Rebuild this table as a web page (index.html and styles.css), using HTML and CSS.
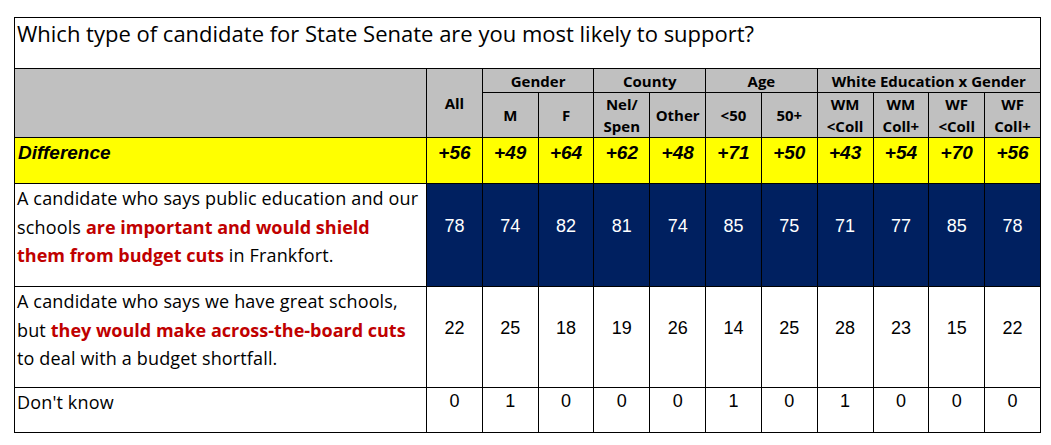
FILE: index.html
```html
<!DOCTYPE html>
<html lang="en">
<head>
<meta charset="utf-8">
<title>State Senate candidate poll</title>
<link rel="stylesheet" href="styles.css">
</head>
<body>
<div class="page">
<table class="poll">
  <colgroup>
    <col class="c-label">
    <col><col><col><col><col><col><col><col><col><col><col>
  </colgroup>
  <tr class="r-title">
    <td colspan="12" class="title">Which type of candidate for State Senate are you most likely to support?</td>
  </tr>
  <tr class="r-h1">
    <td rowspan="2" class="hdr blank"></td>
    <th rowspan="2" class="hdr">All</th>
    <th colspan="2" class="hdr">Gender</th>
    <th colspan="2" class="hdr">County</th>
    <th colspan="2" class="hdr">Age</th>
    <th colspan="4" class="hdr">White Education x Gender</th>
  </tr>
  <tr class="r-h2">
    <th class="hdr">M</th>
    <th class="hdr">F</th>
    <th class="hdr">Nel/<br>Spen</th>
    <th class="hdr">Other</th>
    <th class="hdr">&lt;50</th>
    <th class="hdr">50+</th>
    <th class="hdr">WM<br>&lt;Coll</th>
    <th class="hdr">WM<br>Coll+</th>
    <th class="hdr">WF<br>&lt;Coll</th>
    <th class="hdr">WF<br>Coll+</th>
  </tr>
  <tr class="r-diff">
    <td class="diff-label">Difference</td>
    <td class="diff">+56</td><td class="diff">+49</td><td class="diff">+64</td><td class="diff">+62</td><td class="diff">+48</td><td class="diff">+71</td><td class="diff">+50</td><td class="diff">+43</td><td class="diff">+54</td><td class="diff">+70</td><td class="diff">+56</td>
  </tr>
  <tr class="r-a">
    <td class="label">A candidate who says public education and our schools <span class="hl">are important and would shield them from budget cuts</span> in Frankfort.</td>
    <td class="num win">78</td><td class="num win">74</td><td class="num win">82</td><td class="num win">81</td><td class="num win">74</td><td class="num win">85</td><td class="num win">75</td><td class="num win">71</td><td class="num win">77</td><td class="num win">85</td><td class="num win">78</td>
  </tr>
  <tr class="r-b">
    <td class="label">A candidate who says we have great schools, but <span class="hl">they would make across-the-board cuts</span> to deal with a budget shortfall.</td>
    <td class="num">22</td><td class="num">25</td><td class="num">18</td><td class="num">19</td><td class="num">26</td><td class="num">14</td><td class="num">25</td><td class="num">28</td><td class="num">23</td><td class="num">15</td><td class="num">22</td>
  </tr>
  <tr class="r-c">
    <td class="label">Don't know</td>
    <td class="num">0</td><td class="num">1</td><td class="num">0</td><td class="num">0</td><td class="num">0</td><td class="num">1</td><td class="num">0</td><td class="num">1</td><td class="num">0</td><td class="num">0</td><td class="num">0</td>
  </tr>
</table>
</div>
</body>
</html>
```

FILE: styles.css
```css
html, body {
  margin: 0;
  padding: 0;
  background: #ffffff;
}

.page {
  padding: 17px 0 0 14px;
}

.poll {
  border-collapse: collapse;
  table-layout: fixed;
  width: 1027px;
  font-family: "Open Sans", "Noto Sans", sans-serif;
  color: #000000;
}

.poll td,
.poll th {
  border: 1px solid #000000;
  padding: 0;
}

.c-label {
  width: 412px;
}

.r-title { height: 51px; }
.r-h1 { height: 24px; }
.r-h2 { height: 45px; }
.r-diff { height: 46px; }
.r-a { height: 103px; }
.r-b { height: 101px; }
.r-c { height: 45px; }

.poll .title {
  font-size: 22px;
  line-height: 28px;
  vertical-align: top;
  padding: 1px 3px 0 2px;
}

.poll .hdr {
  background: #c0c0c0;
  font-size: 15px;
  font-weight: 700;
  line-height: 22px;
  text-align: center;
  vertical-align: middle;
}

.poll .diff-label,
.poll .diff {
  background: #ffff00;
  font-family: "Liberation Sans", Arial, sans-serif;
  font-size: 19px;
  font-weight: 700;
  font-style: italic;
  line-height: 22px;
  vertical-align: top;
  padding-top: 4px;
}

.poll .diff-label {
  text-align: left;
  padding-left: 3px;
}

.poll .diff {
  text-align: center;
}

.poll .label {
  font-size: 18px;
  line-height: 28.5px;
  letter-spacing: 0.15px;
  vertical-align: top;
  padding: 0 5px 0 2px;
}

.hl {
  color: #c00000;
  font-weight: 700;
  letter-spacing: 0;
}

.poll .num {
  font-family: "Liberation Sans", Arial, sans-serif;
  font-size: 18px;
  line-height: 22px;
  text-align: center;
  vertical-align: middle;
  padding-bottom: 19px;
}

.poll .win {
  background: #002060;
  color: #ffffff;
}
```
